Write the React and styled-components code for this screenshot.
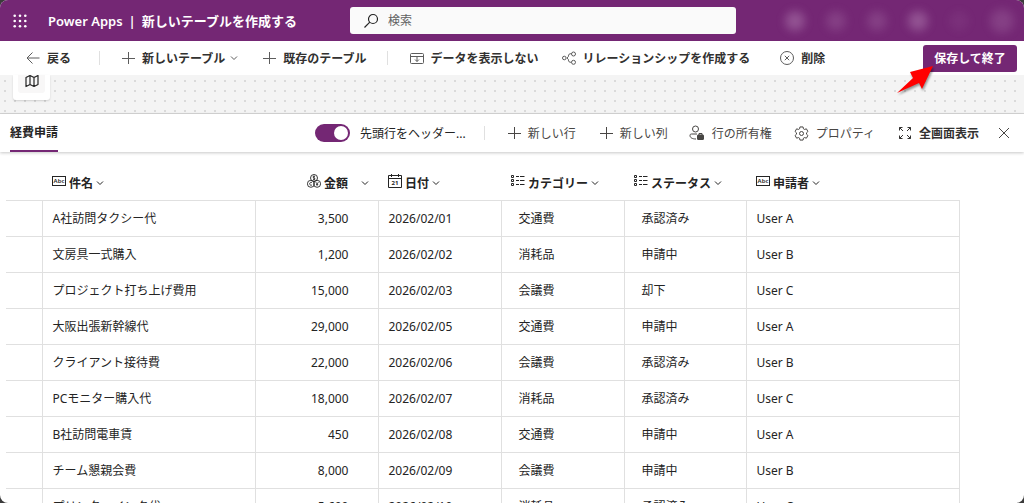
import React from "react"
import styled, { createGlobalStyle } from "styled-components"

const headers = [
    { label: "件名", icon: "text" },
    { label: "金額", icon: "money", right: true },
    { label: "日付", icon: "date" },
    { label: "カテゴリー", icon: "choice" },
    { label: "ステータス", icon: "choice" },
    { label: "申請者", icon: "text" },
]

const rows = [
    ["A社訪問タクシー代", "3,500", "2026/02/01", "交通費", "承認済み", "User A"],
    ["文房具一式購入", "1,200", "2026/02/02", "消耗品", "申請中", "User B"],
    ["プロジェクト打ち上げ費用", "15,000", "2026/02/03", "会議費", "却下", "User C"],
    ["大阪出張新幹線代", "29,000", "2026/02/05", "交通費", "申請中", "User A"],
    ["クライアント接待費", "22,000", "2026/02/06", "会議費", "承認済み", "User B"],
    ["PCモニター購入代", "18,000", "2026/02/07", "消耗品", "承認済み", "User C"],
    ["B社訪問電車賃", "450", "2026/02/08", "交通費", "申請中", "User A"],
    ["チーム懇親会費", "8,000", "2026/02/09", "会議費", "申請中", "User B"],
    ["プリンターインク代", "5,600", "2026/02/10", "消耗品", "承認済み", "User C"],
]

const Icon = ({ name }) => {
    const box = { width: 14, height: 14, viewBox: "0 0 14 14", fill: "none", stroke: "currentColor", strokeWidth: 1, "aria-hidden": true }
    switch (name) {
        case "back":
            return <svg {...box}><path d="M13.5 7H1M6.5 1.5L1 7l5.5 5.5" /></svg>
        case "plus":
            return <svg {...box}><path d="M7.5 1v12M1 7.5h13" /></svg>
        case "close":
            return <svg {...box}><path d="M2 2l10 10M12 2L2 12" /></svg>
        case "search":
            return <svg {...box} width="16" height="16" viewBox="0 0 16 16" strokeWidth="1.2"><circle cx="10" cy="6" r="4.5" /><path d="M6.8 9.2L1.5 14.5" /></svg>
        case "hide":
            return <svg {...box}><rect x=".5" y="2.5" width="13" height="10" rx="1" /><path d="M.5 5.5h13M7 5.5v5M5 8.5l2 2 2-2" /></svg>
        case "relation":
            return <svg {...box}><circle cx="2.3" cy="7" r="1.8" /><circle cx="11.5" cy="3" r="2" /><circle cx="11.5" cy="11.3" r="2" /><path d="M9.5 2.8C7.5 2.3 6.2 3.5 6.5 5.3L5 7l1.5 1.7c-.3 1.8 1 3 3 2.5" /></svg>
        case "delete":
            return <svg {...box}><circle cx="7" cy="7" r="6.5" /><path d="M4.8 4.8l4.4 4.4M9.2 4.8L4.8 9.2" /></svg>
        case "owner":
            return <svg {...box} width="16" height="16" viewBox="0 0 16 16"><circle cx="6.5" cy="4" r="3" /><path d="M7 14C3 14 1 12.5 1 10.5c0-1 .5-1.5 1.5-1.5H8" /><path d="M10 10V8.5h3V10" /><rect x="8.5" y="10" width="6" height="4.5" rx=".5" fill="currentColor" /></svg>
        case "gear":
            return <svg {...box} width="15" height="15" viewBox="0 0 24 24" strokeWidth="1.6"><path d="M9.5 1.5h5l.6 3 1.8 1 2.9-1 2.5 4.3L20 10.9v2.2l2.3 2.1-2.5 4.3-2.9-1-1.8 1-.6 3h-5l-.6-3-1.8-1-2.9 1-2.5-4.3L4 13.1v-2.2L1.700 8.8l2.5-4.3 2.9 1 1.8-1z" strokeLinejoin="round" /><circle cx="12" cy="12" r="3.2" /></svg>
        case "full":
            return <svg {...box}><path d="M1.5 4.5v-3h3M1.5 1.5L5 5M9.5 1.5h3v3M12.5 1.5L9 5M1.5 9.5v3h3M1.5 12.5L5 9M12.5 9.5v3h-3M12.5 12.5L9 9" /></svg>
        case "map":
            return <svg {...box} strokeWidth="1.2" strokeLinejoin="round"><path d="M1 2.5L5 .5l4 2 4-2v9l-4 2-4-2-4 2zM5 .5v9M9 2.5v9" /></svg>
        case "chevron":
            return <svg {...box} width="8" height="8" viewBox="0 0 8 8"><path d="M1 2.5l3 3 3-3" /></svg>
        case "text":
            return <svg {...box}><rect x=".5" y="2.5" width="13" height="9" /><text x="7" y="9" textAnchor="middle" fontSize="6" fill="currentColor" stroke="none">Abc</text></svg>
        case "date":
            return <svg {...box}><path d="M.5 1.5h13v12H.5zM.5 4.5h13M3.5 0v3M10.5 0v3" /><text x="7" y="11" textAnchor="middle" fontSize="6" fontWeight="bold" fill="currentColor" stroke="none">21</text></svg>
        case "choice":
            return <svg {...box}><path d="M.5 1.5h2v2h-2zM.5 5.5h2v2h-2zM.5 9.5h2v2h-2zM5 2.5h3M9 2.5h4.5M5 6.5h3M9 6.5h4.5M5 10.5h3M9 10.5h4.5" /></svg>
        case "money":
            return <svg {...box} strokeWidth=".9"><circle cx="7" cy="4" r="3.5" /><circle cx="3.9" cy="9.8" r="3.5" /><circle cx="10.1" cy="9.8" r="3.5" /><path d="M8 2.6c-.8-.6-2-.4-2 .4 0 1 2 .9 2 1.9 0 .9-1.4 1-2 .4M7 1.8v4.5M5 8.7c-1-.8-2.3-.2-2.3 1.1s1.3 1.9 2.3 1.1M8.8 8.2l1.3 1.5 1.3-1.5M10.1 9.7v2.1M9 10.3h2.2" /></svg>
        default:
            return null
    }
}

export default function App() {
    return (
        <Screen>
            <GlobalStyle />
            <TopBar>
                <WaffleButton aria-label="アプリ起動ツール">
                    <svg width="14" height="14" viewBox="0 0 14 14" fill="#fff">
                        {[0, 1, 2].map((y) => [0, 1, 2].map((x) => (
                            <circle key={`${x}${y}`} cx={1.7 + x * 5.3} cy={1.7 + y * 5.3} r="1.3" />
                        )))}
                    </svg>
                </WaffleButton>
                <Brand>Power Apps<Bar>|</Bar>新しいテーブルを作成する</Brand>
                <SearchBox>
                    <Icon name="search" />
                    <input type="search" placeholder="検索" aria-label="検索" />
                </SearchBox>
                <Blurs>
                    <Blob $strong />
                    <Blob />
                    <Blob />
                    <Blob $strong />
                    <Blob $faint />
                    <Blob $wide />
                </Blurs>
            </TopBar>
            <CommandBar>
                <Command><Icon name="back" />戻る</Command>
                <Divider $before={28} $after={21} />
                <Command><Icon name="plus" />新しいテーブル<Icon name="chevron" /></Command>
                <Command $before={24}><Icon name="plus" />既存のテーブル</Command>
                <Divider $before={20} $after={22} />
                <Command><Icon name="hide" />データを表示しない</Command>
                <Command $before={23}><Icon name="relation" />リレーションシップを作成する</Command>
                <Command $before={30}><Icon name="delete" />削除</Command>
                <SaveButton>
                    保存して終了
                    <Pointer width="40" height="34" viewBox="0 0 40 34" aria-hidden="true">
                        <path d="M2 30L18 15l-3-6 23-6-11 23-3-6z" />
                    </Pointer>
                </SaveButton>
            </CommandBar>
            <Canvas>
                <MapCard><MapButton aria-label="ミニマップ"><Icon name="map" /></MapButton></MapCard>
            </Canvas>
            <TableBar>
                <Tab>経費申請</Tab>
                <Toggle>
                    <input type="checkbox" role="switch" defaultChecked />
                    先頭行をヘッダー...
                </Toggle>
                <Divider $before={18} $after={22} />
                <Tool><Icon name="plus" />新しい行</Tool>
                <Tool $before={23}><Icon name="plus" />新しい列</Tool>
                <Tool $before={21}><Icon name="owner" />行の所有権</Tool>
                <Tool $before={22}><Icon name="gear" />プロパティ</Tool>
                <Tool $before={23} $bold><Icon name="full" />全画面表示</Tool>
                <Tool $before={18} aria-label="閉じる"><Icon name="close" /></Tool>
            </TableBar>
            <TableArea>
                <Grid>
                    <colgroup>
                        <Col $w={36} />
                        <Col $w={213} />
                        <Col $w={123} />
                        <Col $w={123} />
                        <Col $w={123} />
                        <Col $w={122} />
                        <Col $w={213} />
                    </colgroup>
                    <thead>
                        <tr>
                            <th />
                            {headers.map((h) => (
                                <th key={h.label}>
                                    <HeadButton $right={h.right}>
                                        <Icon name={h.icon} />
                                        <span>{h.label}</span>
                                        <Icon name="chevron" />
                                    </HeadButton>
                                </th>
                            ))}
                        </tr>
                    </thead>
                    <tbody>
                        {rows.map((row) => (
                            <tr key={row[0]}>
                                <Cell />
                                <Cell>{row[0]}</Cell>
                                <Cell $number>{row[1]}</Cell>
                                <Cell>{row[2]}</Cell>
                                <Cell $choice>{row[3]}</Cell>
                                <Cell $choice>{row[4]}</Cell>
                                <Cell>{row[5]}</Cell>
                            </tr>
                        ))}
                    </tbody>
                </Grid>
            </TableArea>
        </Screen>
    )
}

const GlobalStyle = createGlobalStyle`
    * {
        box-sizing: border-box;
    }
    body {
        margin: 0;
        background: #3b3b3b;
        overflow: hidden;
    }
    body, button, input {
        font-family: "Noto Sans", "Noto Sans CJK JP", sans-serif;
        font-size: 12px;
        color: #242424;
    }
    button {
        border: 0;
        padding: 0;
        background: none;
        white-space: nowrap;
    }
    svg {
        flex: none;
    }
`

const Screen = styled.div`
    display: flex;
    flex-direction: column;
    height: 100vh;
    overflow: hidden;
    background: #fff;
    border-radius: 8px;
`

const TopBar = styled.header`
    display: flex;
    align-items: center;
    flex: none;
    height: 41px;
    padding: 0 10px 0 13px;
    background: #742774;
`

const WaffleButton = styled.button`
    display: flex;
`

const Brand = styled.div`
    width: 302px;
    margin-left: 21px;
    font-size: 13px;
    font-weight: 600;
    color: #fff;
    white-space: nowrap;
`

const Bar = styled.span`
    margin: 0 6px;
`

const SearchBox = styled.label`
    display: flex;
    align-items: center;
    gap: 9px;
    flex: 0 1 386px;
    height: 27px;
    padding: 0 13px;
    background: #fafafa;
    border-radius: 3px;

    input {
        flex: 1;
        min-width: 0;
        border: 0;
        padding: 0;
        background: none;
        outline: none;
    }
    input::placeholder {
        color: #616161;
    }
`

const Blurs = styled.div`
    display: flex;
    align-items: center;
    gap: 21px;
    margin-left: auto;
`

const Blob = styled.span`
    width: ${(p) => (p.$wide ? 24 : 20)}px;
    height: ${(p) => (p.$wide ? 24 : 20)}px;
    border-radius: 50%;
    background: #b98ab9;
    opacity: ${(p) => (p.$strong ? 0.45 : p.$faint ? 0.1 : 0.25)};
    filter: blur(5px);
`

const CommandBar = styled.div`
    display: flex;
    align-items: center;
    flex: none;
    height: 34px;
    padding: 0 7px 0 26px;
    background: #fff;
`

const Command = styled.button`
    display: flex;
    align-items: center;
    gap: 7px;
    margin-left: ${(p) => p.$before || 0}px;
    font-weight: 600;
    color: #323130;

    svg {
        color: #5c5c5c;
    }
    svg + svg {
        margin-left: -2px;
    }
`

const Divider = styled.span`
    width: 1px;
    height: 14px;
    margin: 0 ${(p) => p.$after}px 0 ${(p) => p.$before}px;
    background: #e0e0e0;
`

const SaveButton = styled.button`
    position: relative;
    width: 94px;
    height: 27px;
    margin-left: auto;
    border-radius: 3px;
    background: #742774;
    color: #fff;
    font-weight: 600;
`

const Pointer = styled.svg`
    position: absolute;
    left: -28px;
    top: 18px;
    z-index: 1;
    overflow: visible;
    fill: #ff0000;
    filter: drop-shadow(1px 2px 1px rgba(0, 0, 0, 0.4));
`

const Canvas = styled.div`
    flex: none;
    height: 39px;
    padding-left: 13px;
    background-color: #f4f4f4;
    background-image: radial-gradient(circle at 5px 6px, #dadada 0 1px, transparent 1px);
    background-size: 10px 10px;
    border-bottom: 1px solid #d6d6d6;
`

const MapCard = styled.div`
    display: flex;
    justify-content: center;
    width: 37px;
    height: 25px;
    background: #fff;
    border-radius: 0 0 3px 3px;
    box-shadow: 0 1px 2px rgba(0, 0, 0, 0.15);
`

const MapButton = styled.button`
    display: flex;
    align-items: flex-start;
    justify-content: center;
    width: 27px;
    height: 18px;
    background: #f8f7f7;
    border-radius: 0 0 3px 3px;
`

const TableBar = styled.div`
    display: flex;
    align-items: center;
    flex: none;
    height: 38px;
    padding: 0 13px 0 10px;
    background: #fff;
    box-shadow: 0 1px 3px rgba(0, 0, 0, 0.22);
`

const Tab = styled.button`
    align-self: stretch;
    margin-right: auto;
    border-bottom: 2px solid #742774;
    font-weight: 600;
`

const Toggle = styled.label`
    display: flex;
    align-items: center;
    gap: 10px;
    white-space: nowrap;

    input {
        appearance: none;
        display: flex;
        align-items: center;
        justify-content: flex-end;
        width: 35px;
        height: 18px;
        margin: 0;
        padding: 2px;
        border-radius: 9px;
        background: #742774;
    }
    input::before {
        content: "";
        width: 14px;
        height: 14px;
        border-radius: 50%;
        background: #fff;
    }
`

const Tool = styled.button`
    display: flex;
    align-items: center;
    gap: 7px;
    margin-left: ${(p) => p.$before || 0}px;
    font-weight: ${(p) => (p.$bold ? 600 : 400)};
    color: ${(p) => (p.$bold ? "#323130" : "#484644")};
`

const TableArea = styled.main`
    flex: 1;
    min-height: 0;
    overflow: hidden;
    padding: 12px 65px 0 6px;
`

const Grid = styled.table`
    width: 100%;
    table-layout: fixed;
    border-collapse: collapse;

    th {
        height: 36px;
        padding: 2px 9px 0 10px;
        border-bottom: 1px solid #e0e0e0;
    }
`

const Col = styled.col`
    width: ${(p) => p.$w}px;
`

const HeadButton = styled.button`
    display: flex;
    align-items: center;
    gap: 3px;
    margin-left: ${(p) => (p.$right ? "auto" : 0)};
    font-weight: 600;

    span {
        margin-right: ${(p) => (p.$right ? 10 : 0)}px;
    }
    svg:first-child {
        margin-bottom: 4px;
    }
`

const Cell = styled.td`
    height: 36px;
    padding: 0 ${(p) => (p.$number ? 29 : 10)}px 0 ${(p) => (p.$choice ? 17 : 10)}px;
    border-bottom: 1px solid #e0e0e0;
    border-right: 1px solid #e0e0e0;
    text-align: ${(p) => (p.$number ? "right" : "left")};
    white-space: nowrap;
`
